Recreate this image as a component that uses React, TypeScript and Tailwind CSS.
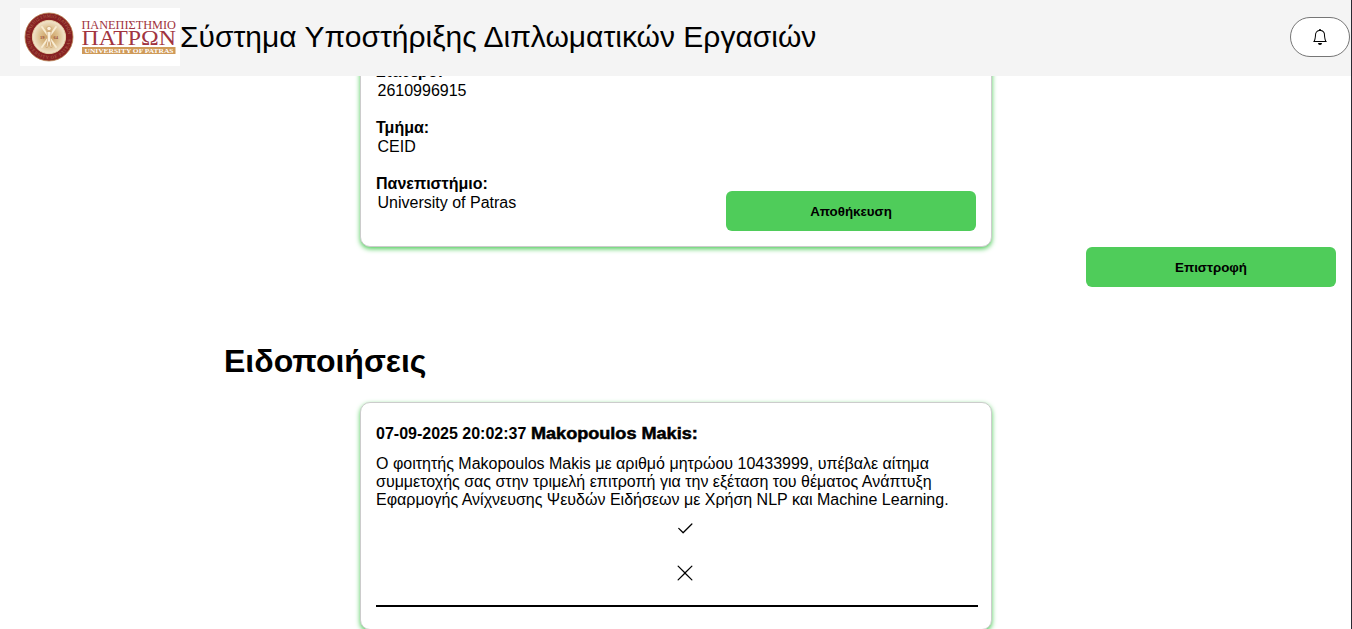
import type { ReactNode } from "react";
import { BsBell, BsCheck2, BsXLg } from "react-icons/bs";

function UniversityLogo() {
  return (
    <svg width="160" height="58" viewBox="0 0 160 58" className="block shrink-0" aria-label="Πανεπιστήμιο Πατρών">
      <defs>
        <path id="sealTop" d="M9.6 29a19.4 19.4 0 0 1 38.8 0" />
        <path id="sealBottom" d="M7 29a22 22 0 0 0 44 0" />
        <radialGradient id="sealFill">
          <stop offset="0" stopColor="#c99a5c" />
          <stop offset="0.55" stopColor="#ddc08f" />
          <stop offset="1" stopColor="#f3e6cf" />
        </radialGradient>
      </defs>
      <rect width="160" height="58" fill="#fff" />
      <circle cx="29" cy="29" r="24" fill="#862022" stroke="#b98350" strokeWidth="0.8" />
      <circle cx="29" cy="29" r="16.6" fill="url(#sealFill)" stroke="#e8cfa4" strokeWidth="1" />
      <g fontFamily="Liberation Serif, serif" fontSize="4.600" fill="#b06a50">
        <text>
          <textPath href="#sealTop" textLength="58">ΠΑΝΕΠΙΣΤΗΜΙΟ ΠΑΤΡΩΝ</textPath>
        </text>
        <text>
          <textPath href="#sealBottom" textLength="66">UNIVERSITY OF PATRAS</textPath>
        </text>
      </g>
      <g stroke="#f8ecd3" strokeWidth="1.9" strokeLinecap="round" fill="none">
        <path d="M22 19L36 39M36 19L22 39" />
      </g>
      <g fill="#faf0dc" stroke="#bd8a50" strokeWidth="0.5">
        <circle cx="29" cy="20.500" r="2.200" />
        <path d="M27 23.500h4l-.5 8 1.500 8h-1.500l-1.500-6-1.500 6h-1.500l1.500-8z" />
      </g>
      <g fontFamily="Liberation Serif, serif" fontSize="4.500" fontWeight="700" fill="#9c4b38">
        <text x="20" y="30.500">19</text>
        <text x="33.500" y="30.500">64</text>
      </g>
      <g fontFamily="Liberation Serif, serif" fill="#a13440">
        <text x="61.500" y="20.800" fontSize="12.500" textLength="94.500" lengthAdjust="spacingAndGlyphs">ΠΑΝΕΠΙΣΤΗΜΙΟ</text>
        <text x="61.500" y="37" fontSize="21" textLength="94.500" lengthAdjust="spacingAndGlyphs">ΠΑΤΡΩΝ</text>
      </g>
      <rect x="62" y="39" width="93.500" height="7" fill="#cf9a58" />
      <text x="64.500" y="44.800" fontFamily="Liberation Serif, serif" fontSize="6.500" fontWeight="700" fill="#fff" textLength="89" lengthAdjust="spacingAndGlyphs">
        UNIVERSITY OF PATRAS
      </text>
    </svg>
  );
}

function Header() {
  return (
    <header className="relative z-10 flex h-[76px] shrink-0 items-center bg-[#f4f4f4] pl-5 pr-px">
      <div className="-mt-0.5 flex items-center">
        <UniversityLogo />
        <h1 className="whitespace-nowrap text-[30px] leading-[40px]">
          Σύστημα Υποστήριξης Διπλωματικών Εργασιών
        </h1>
      </div>
      <button className="-mt-0.5 ml-auto flex h-10 w-[60px] items-center justify-center rounded-full border border-[#767676] bg-white" aria-label="Ειδοποιήσεις">
        <BsBell size={16} />
      </button>
    </header>
  );
}

function Card({ children, className }: { children: ReactNode; className: string }) {
  return (
    <section className={`ml-[360px] w-[632px] rounded-[10px] border border-[#ccc] bg-white shadow-[0_2px_5px_#4fcc5a] ${className}`}>
      {children}
    </section>
  );
}

function Field({ label, value }: { label: string; value: string }) {
  return (
    <div className="mb-[19px] text-base">
      <div className="h-[18px] font-bold leading-[18px]">{label}</div>
      <div className="h-[19px] pl-[1.500px] leading-[19px]">{value}</div>
    </div>
  );
}

function ActionButton({ children }: { children: ReactNode }) {
  return (
    <button className="h-10 w-[250px] rounded-[6px] bg-[#4fcc5a] pt-0.5 text-[13.333px] font-bold">{children}</button>
  );
}

export default function App() {
  return (
    <div className="flex h-[629px] overflow-hidden bg-white font-['Liberation_Sans',Arial,sans-serif] text-black">
      <div className="flex min-w-0 flex-1 flex-col overflow-hidden">
        <Header />
        <main className="-mt-3.5 flex flex-1 flex-col">
          <Card className="h-[185px] shrink-0 rounded-t-none px-[15px]">
            <Field label="Σταθερό:" value="2610996915" />
            <Field label="Τμήμα:" value="CEID" />
            <div className="flex justify-between">
              <Field label="Πανεπιστήμιο:" value="University of Patras" />
              <div className="mt-4">
                <ActionButton>Αποθήκευση</ActionButton>
              </div>
            </div>
          </Card>
          <div className="flex shrink-0 justify-end pr-[15px]">
            <ActionButton>Επιστροφή</ActionButton>
          </div>
          <h2 className="ml-56 mt-14 h-[37px] shrink-0 text-[32px] font-bold leading-[37px]">Ειδοποιήσεις</h2>
          <Card className="mt-[22px] h-[228px] shrink-0 px-[15px] pt-[22px]">
            <h3 className="h-[18px] whitespace-nowrap text-base font-bold leading-[18px]">
              07-09-2025 20:02:37{" "}
              <span className="inline-block origin-left scale-x-[1.13] [-webkit-text-stroke:0.5px_black]">Makopoulos Makis:</span>
            </h3>
            <p className="mt-3 whitespace-nowrap text-base leading-[18px]">
              Ο φοιτητής Makopoulos Makis με αριθμό μητρώου 10433999, υπέβαλε αίτημα
              <br />
              συμμετοχής σας στην τριμελή επιτροπή για την εξέταση του θέματος Ανάπτυξη
              <br />
              Εφαρμογής Ανίχνευσης Ψευδών Ειδήσεων με Χρήση NLP και Machine Learning.
            </p>
            <div className="flex flex-col items-center gap-6 pt-[10px]">
              <button className="ml-[18px]" aria-label="Αποδοχή"><BsCheck2 size={20} /></button>
              <button className="ml-[18px]" aria-label="Απόρριψη"><BsXLg size={20} /></button>
            </div>
            <hr className="mt-[22px] w-[602px] border-0 border-t-2 border-black" />
          </Card>
        </main>
      </div>
      <div className="w-px shrink-0 bg-[#2b2a33]" />
    </div>
  );
}
